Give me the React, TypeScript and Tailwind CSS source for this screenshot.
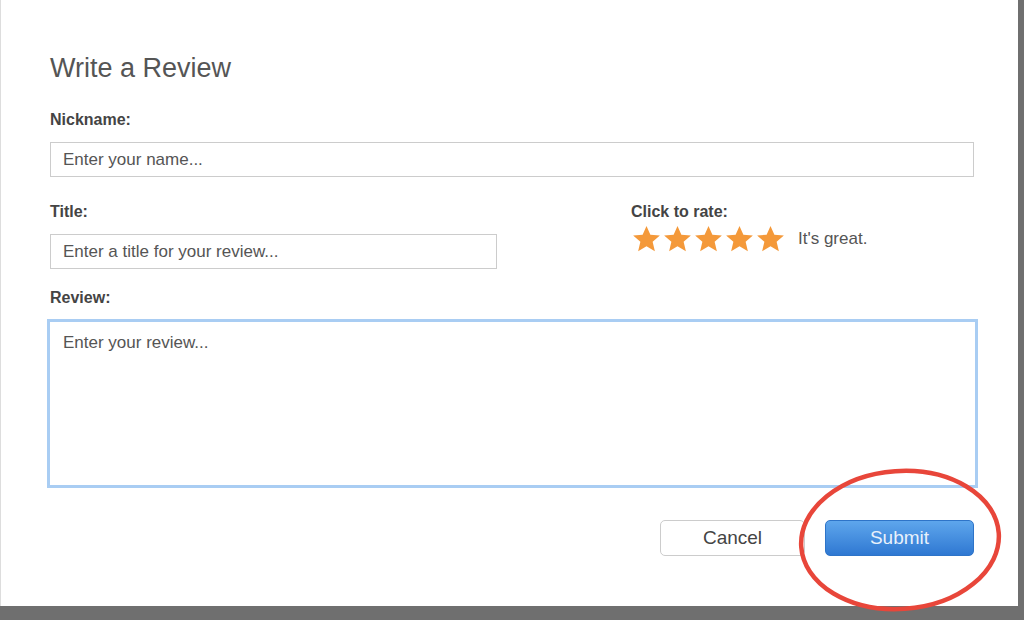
export default function App() {
  return (
    <div className="relative h-[620px] w-[1024px] overflow-hidden bg-[#6f6f6f]" style={{ fontFamily: '"Liberation Sans", Arial, sans-serif' }}>
      <div className="h-[606px] w-[1018px] border-l border-[#ddd] bg-white pl-[49px] pr-[44px] pt-[52px]">
        <h1 className="text-[27px] leading-[32px] text-[#555]">Write a Review</h1>
        <div className="mt-[26px] text-[16px] font-semibold leading-[20px] text-[#444]">Nickname:</div>
        <input className="mt-[12px] h-[35px] w-[924px] border border-[#ccc] px-[12px] text-[17px] text-[#555] placeholder:text-[#555] outline-none" placeholder="Enter your name..." />
        <div className="mt-[25px] flex">
          <div className="w-[581px]">
            <div className="text-[16px] font-semibold leading-[20px] text-[#444]">Title:</div>
            <input className="mt-[12px] h-[35px] w-[447px] border border-[#ccc] px-[12px] text-[17px] text-[#555] placeholder:text-[#555] outline-none" placeholder="Enter a title for your review..." />
          </div>
          <div>
            <div className="text-[16px] font-semibold leading-[20px] text-[#444]">Click to rate:</div>
            <div className="mt-[2px] flex items-center">
              {[0, 1, 2, 3, 4].map((i) => (
                <svg key={i} width="31" height="30" viewBox="0 0 24 24" className="text-[#f4993a]">
                  <path fill="currentColor" d="M12 1.5l3.1 7.1 7.6.6-5.8 5 1.8 7.5L12 17.7l-6.7 4 1.8-7.5-5.8-5 7.6-.6z" />
                </svg>
              ))}
              <span className="ml-[12px] text-[17px] text-[#555]">It's great.</span>
            </div>
          </div>
        </div>
        <div className="mt-[19px] text-[16px] font-semibold leading-[20px] text-[#444]">Review:</div>
        <textarea className="-ml-[3px] mt-[11px] h-[169px] w-[931px] resize-none border-[3px] border-[#a9cdf3] px-[13px] py-[8px] text-[17px] text-[#555] placeholder:text-[#555] outline-none" placeholder="Enter your review..." />
        <div className="mt-[25px] flex justify-end gap-[20px]">
          <button className="h-[36px] w-[145px] rounded-[5px] border border-[#ccc] bg-white text-[19px] text-[#444]">Cancel</button>
          <button className="h-[36px] w-[149px] rounded-[5px] border border-[#2e74c8] bg-gradient-to-b from-[#5ea6ec] to-[#2f78d2] text-[19px] text-[#e8f1fb]">Submit</button>
        </div>
      </div>
      <svg className="absolute left-[796px] top-[466px]" width="210" height="150" viewBox="0 0 210 150">
        <ellipse cx="104" cy="74" rx="99" ry="69" fill="none" stroke="#e8463a" strokeWidth="4.5" transform="rotate(-4 104 74)" />
      </svg>
    </div>
  );
}
